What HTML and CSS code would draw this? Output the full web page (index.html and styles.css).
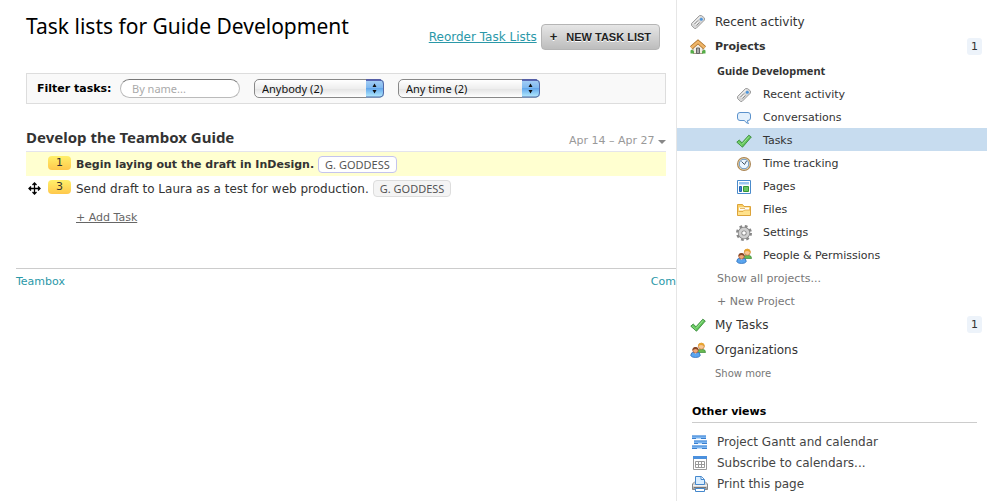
FILE: index.html
```html
<!DOCTYPE html>
<html lang="en">
<head>
<meta charset="utf-8">
<title>Task lists for Guide Development</title>
<link rel="stylesheet" href="styles.css">
</head>
<body>
<svg class="defs" aria-hidden="true">
  <defs>
    <linearGradient id="silver" x2="0" y2="1"><stop offset="0" stop-color="#eee"/><stop offset="1" stop-color="#999"/></linearGradient>
    <linearGradient id="aqua" x2="0" y2="1"><stop offset="0" stop-color="#a9d0f5"/><stop offset=".45" stop-color="#80b9f0"/><stop offset=".5" stop-color="#64a8ec"/><stop offset="1" stop-color="#b9f0ff"/></linearGradient>
    <symbol id="tag" viewBox="0 0 16 16">
      <path d="M9.5 1.5 11.500 1.500 14.500 4 14.500 6 6 14.500 4.500 14.500 1.500 11.500 1.500 9.500Z" fill="#d6d6d6" stroke="#a0a0a0"/>
      <path d="M10 2.800 3 9.800" stroke="#f7f7f7" fill="none"/>
      <path d="M4.500 10 8 6.500M6.500 11.500l3-3" stroke="#8d8d8d" fill="none"/><path d="M5.500 10.700 8.500 7.700" stroke="#fff"/>
      <circle cx="11.300" cy="5.300" r="1.500" fill="#4b95dd"/>
    </symbol>
    <symbol id="home" viewBox="0 0 16 16">
      <path d="M3 7 8 2.500 13 7v7.500H3Z" fill="#f3eee4" stroke="#a89b8b"/>
      <path d="M6.500 9h3v5.500h-3Z" fill="#aaa" stroke="#666"/>
      <path d="M1.300 8.700 8 2.800l6.700 5.900" fill="none" stroke="#a86c24" stroke-width="4"/>
      <path d="M1.300 8.700 8 2.800l6.700 5.900" fill="none" stroke="#efb568" stroke-width="2.500"/>
      <path d="M.5 14.500v-3l1.500-1 2 2v2ZM12 14.500v-2l2-2 1.500 1v3Z" fill="#55ad48"/>
    </symbol>
    <symbol id="chat" viewBox="0 0 16 16">
      <path d="M4 2.500h8q2.500 0 2.500 2.500v3q0 2.500-2.500 2.500h-.5q0 2 1 3-3-.5-4-3H4Q1.500 10.500 1.500 8V5Q1.500 2.500 4 2.500Z" fill="#e3f0fc" stroke="#5b92cc"/>
    </symbol>
    <symbol id="check" viewBox="0 0 16 16">
      <path d="M.8 9.200 3.200 7 6 9.800 12.800 2.200 15.300 4 6.500 14.200Z" fill="#62c65b" stroke="#3a8a3c" stroke-width=".9"/>
      <path d="M2.200 9 6 12.500" stroke="#8bdc80" fill="none"/><path d="M6.300 11.200 13 3.500" stroke="#9de492" fill="none"/>
    </symbol>
    <symbol id="clock" viewBox="0 0 16 16">
      <circle cx="8" cy="8" r="7" fill="#a98351"/><circle cx="8" cy="8" r="6" fill="#ead4a5"/>
      <circle cx="8" cy="8" r="4.800" fill="#eaf5ff" stroke="#6594c7"/>
      <path d="M5.500 5.500 8.500 8.500l2-3.500" fill="none" stroke="#456"/>
    </symbol>
    <symbol id="page" viewBox="0 0 16 16">
      <path d="M1.500 1.500h13v13h-13Z" fill="#fff" stroke="#4a8bcc"/>
      <path d="M3 3h10v2.500H3Z" fill="#9bc6ef"/><path d="M3.500 7.500h2v5h-2Z" fill="#3f82d1" stroke="#2764af"/><path d="M7.500 7.500h5v5h-5Z" fill="#69c562" stroke="#379536"/>
    </symbol>
    <symbol id="folder" viewBox="0 0 16 16">
      <path d="M1.500 13.500v-11h5l1.500 2h6.500v9Z" fill="#fbd169" stroke="#dca33a"/>
      <path d="M3 5.500h10v3H3Z" fill="#fff"/><path d="M2 13V9.500h5L8.500 8H14v5Z" fill="#ffe28c"/><path d="M4 6.500h5M2.500 9.500H7L8.500 8H14" stroke="#d99c33" fill="none" stroke-width=".7"/>
    </symbol>
    <symbol id="gear" viewBox="0 0 16 16">
      <circle cx="8" cy="8" r="6.500" fill="none" stroke="#888" stroke-width="3" stroke-dasharray="2.600 2.505"/>
      <circle cx="8" cy="8" r="4" fill="none" stroke="#888" stroke-width="4.400"/>
      <circle cx="8" cy="8" r="4" fill="none" stroke="#cfcfcf" stroke-width="2.800"/>
    </symbol>
    <symbol id="people" viewBox="0 0 16 16">
      <path d="M7 10.500q0-3 3-3h3q2.500 0 2.500 3Z" fill="#68b950" stroke="#398939" stroke-width=".7"/>
      <circle cx="11.300" cy="4.300" r="3" fill="#f9c693" stroke="#c17730" stroke-width=".7"/><path d="M8 4.500Q8 .7 11.300.7q3.300 0 3.400 4Q13 3 11 3T8 4.500Z" fill="#e7a432"/>
      <path d="M.7 13.500Q1 10 4 10h3q3 0 3.300 3.500-1 2-4.800 2T.7 13.500Z" fill="#5aa5ef" stroke="#2867b1" stroke-width=".7"/>
      <path d="m4 10 1.500 2L7 10" fill="#fff"/>
      <circle cx="5.500" cy="8.300" r="2.700" fill="#efa878" stroke="#a75834" stroke-width=".7"/><path d="M2.400 8.500Q2.200 5 5.500 5t3.100 3.500Q7.500 7 5.500 7T2.400 8.500Z" fill="#864627"/>
    </symbol>
    <symbol id="gantt" viewBox="0 0 16 16">
      <path d="M0 3h14M2 8h13M0 13h15" stroke="#7db6f1" stroke-width="3"/>
      <path d="M0 2h14M2 7h13M0 12h15" stroke="#4a8cd8"/><path d="M0 4.500h4M9 4.500h5M2 9.500h4M10 9.500h5M0 14.500h5M10 14.500h5" stroke="#3b7fce"/>
    </symbol>
    <symbol id="calendar" viewBox="0 0 16 16">
      <path d="M1.500 3.500h13v11h-13Z" fill="#fff" stroke="#999"/><path d="M1 1h14v3H1Z" fill="#4c91de"/><path d="M3.500 6.500h9v6h-9ZM6.500 6.500v6M9.500 6.500v6M3.500 9.500h9" fill="none" stroke="#999"/>
    </symbol>
    <symbol id="printer" viewBox="0 0 16 16">
      <path d="M.5 8 3 5.500h10L15.500 8v5.500H.5Z" fill="url(#silver)" stroke="#888"/>
      <path d="M3.500 8.500v-8h6l3 3v5Z" fill="#d9edff" stroke="#4588cd"/><path d="M9 .5v3h3" fill="#fff" stroke="#4588cd"/>
      <path d="M1 9h14v1.500H1Z" fill="#f2f2f2"/><path d="M2 11.500h12" stroke="#777"/><path d="M3.500 12.500h9v3h-9Z" fill="#fff" stroke="#4588cd"/>
    </symbol>
    <symbol id="stepper" viewBox="0 0 18 18">
      <path d="M0 0h14q4 0 4 4v10q0 4-4 4H0Z" fill="url(#aqua)"/>
      <path d="M0 .5h14q3.500 0 3.500 4v9q0 4-3.500 4H0" fill="none" stroke="#5569a5"/><path d="M0 .5h15" stroke="#36349a"/>
      <path d="M6.500 7.500h4L8.500 4ZM6.500 10.500h4L8.500 14Z" fill="#111"/>
    </symbol>
  </defs>
</svg>
<div class="page">
  <main class="main">
    <div class="content">
      <header class="header">
        <h1 class="title">Task lists for Guide Development</h1>
        <div class="actions">
          <a class="reorder" href="#">Reorder Task Lists</a>
          <button class="new-list" type="button"><span class="plus">+</span>NEW TASK LIST</button>
        </div>
      </header>
      <form class="filter">
        <label class="filter-label" for="name">Filter tasks:</label>
        <input class="search" id="name" type="text" placeholder="By name...">
        <span class="select-wrap person"><select class="select" aria-label="Person"><option>Anybody (2)</option></select><svg class="stepper"><use href="#stepper"/></svg></span>
        <span class="select-wrap time"><select class="select" aria-label="Due date"><option>Any time (2)</option></select><svg class="stepper"><use href="#stepper"/></svg></span>
      </form>
      <section>
        <div class="list-head">
          <h2 class="list-title">Develop the Teambox Guide</h2>
          <span class="dates">Apr 14 – Apr 27 <svg class="caret" viewBox="0 0 8 4"><path d="M0 0h8L4 4Z"/></svg></span>
        </div>
        <ul class="tasks">
          <li class="task current"><span class="handle"></span><span class="count">1</span><span class="task-name">Begin laying out the draft in InDesign.</span><span class="person-tag">G. GODDESS</span></li>
          <li class="task"><span class="handle"><svg class="move" viewBox="0 0 13 13"><path d="M6.500 1v11M1 6.500h11M4.500 3l2-2 2 2M4.500 10l2 2 2-2M3 4.500l-2 2 2 2M10 4.500l2 2-2 2" fill="none" stroke="#000" stroke-width="1.300"/></svg></span><span class="count">3</span><span class="task-name">Send draft to Laura as a test for web production.</span><span class="person-tag">G. GODDESS</span></li>
        </ul>
        <a class="add-task" href="#">+ Add Task</a>
      </section>
    </div>
    <footer class="footer"><a href="#">Teambox</a><a href="#">Com</a></footer>
  </main>
  <aside class="sidebar">
    <nav>
      <a class="nav top" href="#"><svg class="icon"><use href="#tag"/></svg>Recent activity</a>
      <a class="nav top bold" href="#"><svg class="icon"><use href="#home"/></svg>Projects<span class="badge">1</span></a>
      <a class="nav plain project" href="#">Guide Development</a>
      <a class="nav sub" href="#"><svg class="icon"><use href="#tag"/></svg>Recent activity</a>
      <a class="nav sub" href="#"><svg class="icon"><use href="#chat"/></svg>Conversations</a>
      <a class="nav sub selected" href="#"><svg class="icon"><use href="#check"/></svg>Tasks</a>
      <a class="nav sub" href="#"><svg class="icon"><use href="#clock"/></svg>Time tracking</a>
      <a class="nav sub" href="#"><svg class="icon"><use href="#page"/></svg>Pages</a>
      <a class="nav sub" href="#"><svg class="icon"><use href="#folder"/></svg>Files</a>
      <a class="nav sub" href="#"><svg class="icon"><use href="#gear"/></svg>Settings</a>
      <a class="nav sub" href="#"><svg class="icon"><use href="#people"/></svg>People &amp; Permissions</a>
      <a class="nav plain" href="#">Show all projects...</a>
      <a class="nav plain" href="#">+ New Project</a>
      <a class="nav top" href="#"><svg class="icon"><use href="#check"/></svg>My Tasks<span class="badge">1</span></a>
      <a class="nav top" href="#"><svg class="icon"><use href="#people"/></svg>Organizations</a>
      <a class="nav plain more" href="#">Show more</a>
    </nav>
    <section class="views">
      <h3 class="views-title">Other views</h3>
      <a class="view" href="#"><svg class="icon"><use href="#gantt"/></svg>Project Gantt and calendar</a>
      <a class="view" href="#"><svg class="icon"><use href="#calendar"/></svg>Subscribe to calendars...</a>
      <a class="view" href="#"><svg class="icon"><use href="#printer"/></svg>Print this page</a>
    </section>
  </aside>
</div>
</body>
</html>
```
FILE: styles.css
```css
* { box-sizing: border-box; }
body { margin: 0; background: #fff; color: #333; font: 12px/18px "Lucida Grande", "DejaVu Sans", sans-serif; }
a { color: #2a98a8; text-decoration: none; }
h1, h2, h3, ul { margin: 0; padding: 0; }
.defs { position: absolute; width: 0; height: 0; }
.page { display: flex; min-height: 100vh; }
.main { flex: 1; min-width: 0; overflow: hidden; padding: 12px 0 0 16px; }
.content { padding: 0 10px; }
.header { display: flex; justify-content: space-between; align-items: flex-start; height: 61px; }
.title { font: 21px/28px "Noto Sans", sans-serif; color: #000; white-space: nowrap; }
.actions { display: flex; align-items: center; gap: 4px; padding: 12px 6px 0 0; white-space: nowrap; }
.reorder { text-decoration: underline; }
.new-list { height: 26px; padding: 0 8px; border: 1px solid #b5b5b5; border-radius: 4px; background: linear-gradient(#e6e6e6, #bdbdbd); color: #222; font: bold 11px/24px "Liberation Sans", sans-serif; text-shadow: 0 1px 0 #fff; }
.plus { margin-right: 9px; font-size: 13px; }
.filter { display: flex; align-items: center; height: 31px; padding: 0 10px; border: 1px solid #ddd; background: #f9f9f9; }
.filter-label { width: 83px; color: #000; font-size: 11px; font-weight: bold; white-space: nowrap; }
.search { width: 120px; height: 19px; margin-right: 14px; padding: 0 11px; border: 1px solid #bbb; border-top-color: #777; border-radius: 10px; background: #fff; font: 11px/17px "Noto Sans", sans-serif; }
.search::placeholder { color: #aaa; }
.select-wrap { position: relative; display: flex; height: 19px; margin-right: 14px; }
.person { width: 130px; }
.time { width: 142px; }
.select { appearance: none; width: 100%; padding: 0 22px 0 7px; border: 1px solid #888; border-radius: 5px; background: linear-gradient(#fff, #eee 50%, #e3e3e3 51%, #fff); color: #111; font: 11px/17px "Noto Sans", sans-serif; }
.stepper { position: absolute; top: 0; right: 0; width: 18px; height: 19px; pointer-events: none; }
.list-head { display: flex; justify-content: space-between; align-items: center; height: 48px; padding-top: 18px; border-bottom: 1px solid #e4e4ec; }
.list-title { font: bold 15px/20px "Noto Sans", sans-serif; }
.dates { padding-top: 8px; color: #999; font-size: 11px; }
.caret { width: 8px; height: 4px; fill: #888; }
.tasks { list-style: none; }
.task { display: flex; align-items: center; height: 24px; padding-top: 2px; white-space: nowrap; }
.current { background: #ffffd0; }
.current .task-name { font-size: 11px; font-weight: bold; }
.handle { display: flex; width: 22px; padding-left: 2px; }
.move { width: 13px; height: 13px; margin-bottom: 2px; }
.count { width: 23px; height: 14px; margin: 0 5px 4px 0; border-radius: 4px; background: linear-gradient(#fff06a, #ffc84c); font-size: 11px; line-height: 14px; text-align: center; }
.person-tag { height: 17px; margin: 0 0 2px 4px; padding: 0 6px; border: 1px solid #ddd; border-radius: 4px; background: #f4f4f4; color: #555; font: 11px/15px "Noto Sans", sans-serif; }
.current .person-tag { border-color: #c4c4ee; background: #fff; }
.add-task { display: inline-block; margin: 9px 0 0 50px; color: #666; font-size: 11px; text-decoration: underline; }
.footer { display: flex; justify-content: space-between; margin-top: 41px; padding-top: 4px; border-top: 1px solid #ccc; font-size: 11px; }
.sidebar { width: 324px; flex: none; padding: 9px 13px 0 0; border-left: 1px solid #e6e6e6; }
.nav { display: flex; align-items: center; color: #333; white-space: nowrap; }
.icon { width: 16px; height: 16px; flex: none; }
.top { height: 25px; padding: 0 5px 0 13px; gap: 9px; }
.bold { font-size: 11px; font-weight: bold; }
.sub { height: 23px; padding: 2px 0 0 59px; gap: 11px; font-size: 11px; }
.selected { background: #c7dcef; }
.plain { height: 23px; padding: 2px 0 0 40px; color: #777; font-size: 11px; }
.project { padding-top: 0; color: #333; font-family: "Noto Sans", sans-serif; font-weight: bold; }
.more { padding: 0 0 0 38px; font-size: 10px; }
.badge { width: 15px; height: 17px; margin-left: auto; border-radius: 3px; background: #edf3fa; font: 11px/18px "DejaVu Sans", sans-serif; text-align: center; }
.views { padding: 18px 10px 0 15px; }
.views-title { height: 20px; margin-bottom: 8px; border-bottom: 1px solid #ccc; color: #000; font-size: 11px; line-height: 18px; }
.view { display: flex; align-items: center; gap: 9px; height: 21px; color: #444; white-space: nowrap; }
```
